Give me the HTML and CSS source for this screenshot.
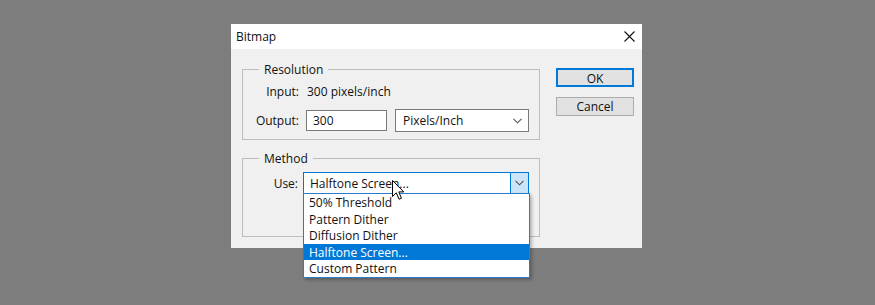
FILE: index.html
```html
<!DOCTYPE html>
<html lang="en">

<head>
    <meta charset="UTF-8">
    <meta name="viewport" content="width=device-width, initial-scale=1.0">
    <title>Bitmap</title>
    <link rel="stylesheet" href="styles.css">
</head>

<body>
    <div class="dialog">
        <div class="titlebar">
            <span class="title">Bitmap</span>
            <svg class="close" width="11" height="11" viewBox="0 0 11 11">
                <path d="M0.5 0.5 L10.5 10.5 M10.5 0.5 L0.5 10.5" stroke="#111" stroke-width="1.1" fill="none" />
            </svg>
        </div>

        <div class="body">
            <div class="groups">
                <div class="group res">
                    <div class="group-title">Resolution</div>
                    <div class="row info">
                        <span class="label">Input:</span>
                        <span>300 pixels/inch</span>
                    </div>
                    <div class="row">
                        <span class="label">Output:</span>
                        <div class="textbox">300</div>
                        <div class="combo units">
                            <span>Pixels/Inch</span>
                            <svg width="9" height="6" viewBox="0 0 9 6">
                                <polyline points="0.5,0.8 4.5,4.8 8.5,0.8" stroke="#555" stroke-width="1.1" fill="none" />
                            </svg>
                        </div>
                    </div>
                </div>

                <div class="group method">
                    <div class="group-title">Method</div>
                    <div class="row">
                        <span class="label use">Use:</span>
                        <div class="combo open">
                            <span>Halftone Screen...</span>
                            <div class="drop-btn">
                                <svg width="9" height="6" viewBox="0 0 9 6">
                                    <polyline points="0.5,0.8 4.5,4.8 8.5,0.8" stroke="#555" stroke-width="1.1" fill="none" />
                                </svg>
                            </div>
                            <ul class="list">
                                <li>50% Threshold</li>
                                <li>Pattern Dither</li>
                                <li>Diffusion Dither</li>
                                <li class="selected">Halftone Screen...</li>
                                <li>Custom Pattern</li>
                            </ul>
                            <svg class="cursor" width="13" height="21" viewBox="0 0 13 21">
                                <path d="M0.5 0.5 L0.5 16.5 L4.3 12.8 L7 19.2 L9.4 18.2 L6.8 11.9 L11.8 11.9 Z" fill="#fff" stroke="#000" stroke-width="1" />
                            </svg>
                        </div>
                    </div>
                </div>
            </div>

            <div class="buttons">
                <button class="btn default">OK</button>
                <button class="btn">Cancel</button>
            </div>
        </div>
    </div>
</body>

</html>
```

FILE: styles.css
```css
html,
body {
    min-height: 305px;
}

body {
    margin: 0;
    background-color: #7d7d7d;
    font-family: 'Open Sans', 'Noto Sans', sans-serif;
    font-size: 12px;
    color: #111;
}

.dialog {
    margin: 24px 0 0 231px;
    width: 411px;
    height: 224px;
    background-color: #f0f0f0;
}

.titlebar {
    height: 25px;
    background-color: #fff;
    display: flex;
    align-items: center;
    justify-content: space-between;
    padding: 0 7px 0 5px;
}

.title {
    line-height: 25px;
}

.body {
    display: flex;
    align-items: flex-start;
    padding: 20px 0 0 11px;
}

.groups {
    width: 298px;
}

/* group box: title sits on the top border line */
.group {
    box-sizing: border-box;
    border: 1px solid #bdbdbd;
    padding: 0 0 7px 10px;
}

.group-title {
    width: fit-content;
    margin: -8px 0 0 6px;
    padding: 0 5px;
    line-height: 15px;
    background-color: #f0f0f0;
}

.method {
    margin-top: 18px;
    padding-bottom: 42px;
}

.row {
    display: flex;
    align-items: center;
    margin-top: 10px;
}

.row.info {
    margin-top: 7px;
    line-height: 15px;
}

.method .row {
    margin-top: 6px;
}

.label {
    width: 46px;
    text-align: right;
    margin-right: 7px;
}

.info .label {
    margin-right: 8px;
}

.label.use {
    width: 45px;
    margin-right: 5px;
}

.textbox {
    box-sizing: border-box;
    width: 81px;
    height: 21px;
    border: 1px solid #7a7a7a;
    background-color: #fff;
    padding-left: 6px;
    line-height: 19px;
    margin-right: 8px;
}

.combo {
    box-sizing: border-box;
    display: flex;
    align-items: center;
    justify-content: space-between;
    background-color: #fff;
    border: 1px solid #7a7a7a;
}

.units {
    width: 134px;
    height: 23px;
    padding: 0 6px 0 7px;
}

.combo.open {
    position: relative;
    width: 226px;
    height: 22px;
    padding-left: 6px;
    border-color: #0078d7;
}

.drop-btn {
    width: 17px;
    height: 100%;
    display: flex;
    align-items: center;
    justify-content: center;
    background-color: #cce4f7;
    border-left: 1px solid #0078d7;
}

.list {
    position: absolute;
    z-index: 5;
    top: 100%;
    left: -1px;
    width: 227px;
    box-sizing: border-box;
    margin: 0;
    padding: 0;
    list-style: none;
    background-color: #fff;
    border: 1px solid #2a7bc9;
    box-shadow: 2px 2px 3px rgba(0, 0, 0, 0.25);
}

.list li {
    height: 16.6px;
    line-height: 17px;
    padding-left: 5px;
}

.list li.selected {
    background-color: #0078d7;
    color: #fff;
}

.cursor {
    position: absolute;
    z-index: 6;
    left: 88px;
    top: 7px;
}

.buttons {
    display: flex;
    flex-direction: column;
    gap: 10px;
    margin: -1px 0 0 16px;
}

.btn {
    box-sizing: border-box;
    width: 78px;
    height: 19px;
    padding: 0;
    font-family: inherit;
    font-size: 12px;
    color: #111;
    background-color: #e1e1e1;
    border: 1px solid #adadad;
    border-radius: 0;
}

.btn.default {
    border: 2px solid #0078d7;
}
```
